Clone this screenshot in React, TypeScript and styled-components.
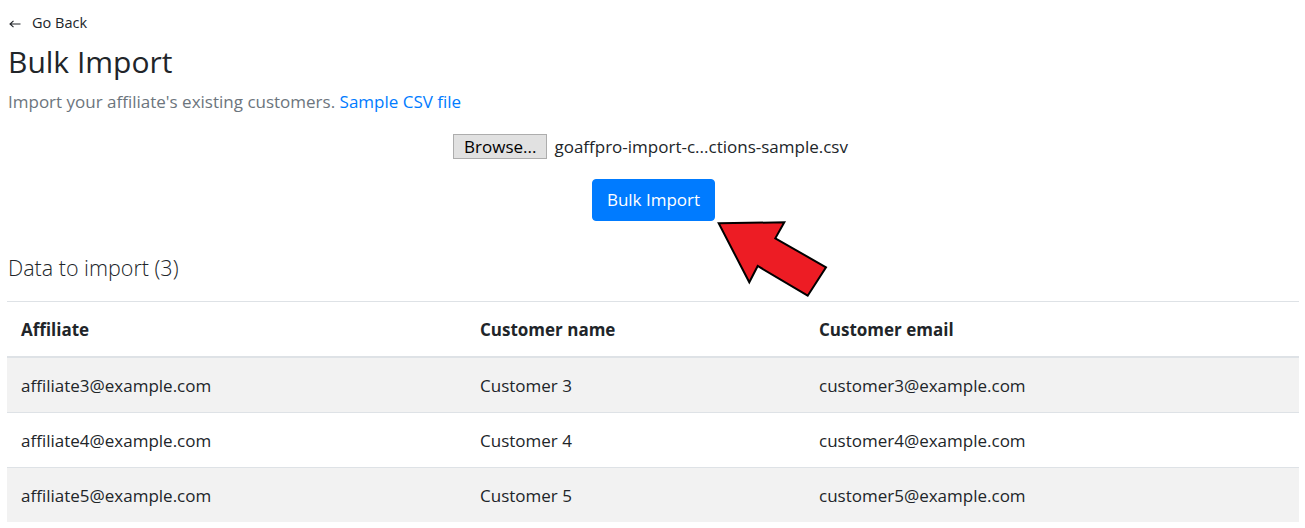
import React from "react";
import styled, { createGlobalStyle } from "styled-components";

const GlobalStyle = createGlobalStyle`
  html, body {
    margin: 0;
    padding: 0;
    background: #ffffff;
  }
  body {
    font-family: "Open Sans", "Noto Sans", Arial, sans-serif;
    font-size: 17px;
    line-height: 1.5;
    color: #212529;
  }
  * {
    box-sizing: border-box;
  }
`;

interface ImportRow {
  affiliate: string;
  name: string;
  email: string;
}

const rows: ImportRow[] = [
  { affiliate: "affiliate3@example.com", name: "Customer 3", email: "customer3@example.com" },
  { affiliate: "affiliate4@example.com", name: "Customer 4", email: "customer4@example.com" },
  { affiliate: "affiliate5@example.com", name: "Customer 5", email: "customer5@example.com" },
];

function BackIcon() {
  return (
    <BackSvg width="12" height="8" viewBox="0 0 12 8">
      <path d="M11.5 4H1M4.5 0.8L1 4l3.5 3.2" fill="none" stroke="#212529" strokeWidth="1.1" />
    </BackSvg>
  );
}

function PointerArrow() {
  return (
    <ArrowSvg width="118" height="84" viewBox="0 0 118 84">
      <polygon
        points="3.7,4.3 69.3,3.3 60.3,19.3 111,48.3 92.7,76.7 42.7,47 34.3,63.3"
        fill="#ed1c24"
        stroke="#000000"
        strokeWidth="2"
        strokeLinejoin="miter"
      />
    </ArrowSvg>
  );
}

export default function App() {
  return (
    <>
      <GlobalStyle />
      <Page>
        <BackLink href="#">
          <BackIcon />
          <span>Go Back</span>
        </BackLink>
        <Title>Bulk Import</Title>
        <Subtitle>
          Import your affiliate's existing customers. <SampleLink href="#">Sample CSV file</SampleLink>
        </Subtitle>

        <UploadRow>
          <BrowseButton type="button">Browse...</BrowseButton>
          <FileName>goaffpro-import-c...ctions-sample.csv</FileName>
        </UploadRow>

        <ActionRow>
          <ButtonWrap>
            <PrimaryButton type="button">Bulk Import</PrimaryButton>
            <PointerArrow />
          </ButtonWrap>
        </ActionRow>

        <SectionTitle>Data to import (3)</SectionTitle>

        <Table>
          <colgroup>
            <col style={{ width: 459 }} />
            <col style={{ width: 339 }} />
            <col />
          </colgroup>
          <thead>
            <tr>
              <HeadCell>Affiliate</HeadCell>
              <HeadCell>Customer name</HeadCell>
              <HeadCell>Customer email</HeadCell>
            </tr>
          </thead>
          <tbody>
            {rows.map((r, i) => (
              <Row key={r.email} $striped={i % 2 === 0}>
                <Cell>{r.affiliate}</Cell>
                <Cell>{r.name}</Cell>
                <Cell>{r.email}</Cell>
              </Row>
            ))}
          </tbody>
        </Table>
      </Page>
    </>
  );
}

const Page = styled.main`
  padding: 9px 6px 0 8px;
`;

const BackLink = styled.a`
  display: inline-flex;
  align-items: center;
  gap: 11px;
  font-size: 14.5px;
  line-height: 24px;
  color: #212529;
  text-decoration: none;
`;

const BackSvg = styled.svg`
  margin-left: 1px;
  margin-top: 2px;
`;

const Title = styled.h1`
  margin: 7px 0 8px;
  font-size: 30px;
  font-weight: 400;
  line-height: 40px;
  color: #212529;
`;

const Subtitle = styled.p`
  margin: 0;
  font-size: 17px;
  line-height: 24px;
  color: #6c757d;
`;

const SampleLink = styled.a`
  color: #007bff;
  text-decoration: none;
`;

const UploadRow = styled.div`
  display: flex;
  justify-content: center;
  align-items: center;
  gap: 7px;
  margin-top: 20px;
  margin-left: -6px;
`;

const BrowseButton = styled.button`
  height: 25px;
  padding: 0 10px;
  font-family: inherit;
  font-size: 17px;
  line-height: 23px;
  color: #000000;
  background: #e1e1e1;
  border: 1px solid #adadad;
  border-radius: 0;
`;

const FileName = styled.span`
  font-size: 17px;
  color: #212529;
`;

const ActionRow = styled.div`
  display: flex;
  justify-content: center;
  margin-top: 19px;
`;

const ButtonWrap = styled.div`
  position: relative;
`;

const PrimaryButton = styled.button`
  height: 42px;
  padding: 0 14px;
  font-family: inherit;
  font-size: 17px;
  color: #ffffff;
  background: #007bff;
  border: 1px solid #007bff;
  border-radius: 4px;
`;

const ArrowSvg = styled.svg`
  position: absolute;
  left: 100%;
  top: calc(100% - 2px);
`;

const SectionTitle = styled.h2`
  margin: 33px 0 19px;
  font-size: 21.5px;
  font-weight: 300;
  line-height: 28px;
  color: #212529;
`;

const Table = styled.table`
  width: calc(100% + 1px);
  margin-left: -1px;
  border-collapse: collapse;
  table-layout: fixed;
  border-top: 1px solid #dee2e6;
`;

const HeadCell = styled.th`
  padding: 16px 14px 14px;
  font-size: 17px;
  font-weight: 700;
  line-height: 24px;
  text-align: left;
  border-bottom: 2px solid #dee2e6;
`;

const Row = styled.tr<{ $striped: boolean }>`
  background: ${(p) => (p.$striped ? "#f2f2f2" : "#ffffff")};
  & + & {
    border-top: 1px solid #dee2e6;
  }
`;

const Cell = styled.td`
  padding: 16px 14px 14px;
  font-size: 17px;
  line-height: 24px;
  color: #212529;
`;
